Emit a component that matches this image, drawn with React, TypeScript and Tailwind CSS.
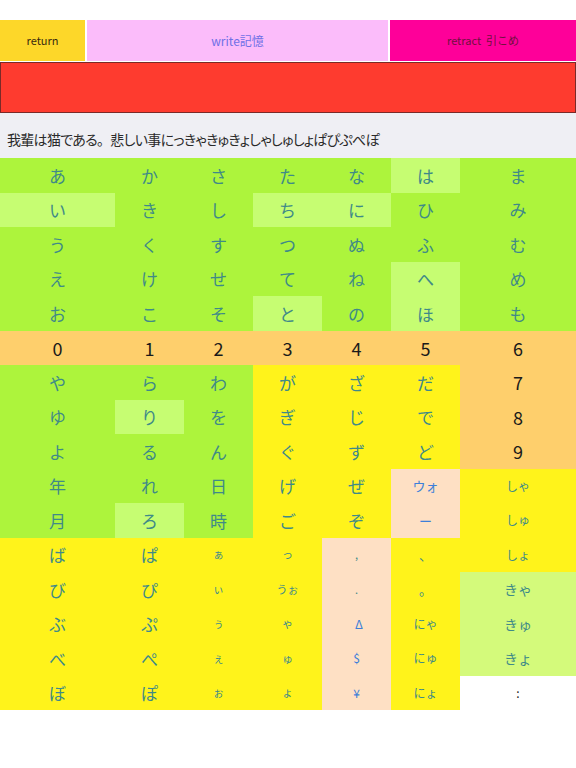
import React from "react";

type Cell = { t: string; bg: string; size?: string; color?: string };

const G = "bg-[#adf43c]";
const LG = "bg-[#c6fd72]";
const O = "bg-[#fecf6c]";
const Y = "bg-[#fff31b]";
const P = "bg-[#fee0c4]";
const LY = "bg-[#d4fa7b]";
const W = "bg-white";

const kana = "text-[#3f8a88]";
const blue = "text-[#3d7fd9]";
const dark = "text-[#1a1a1a]";

const k = (t: string, bg: string, size = "text-[17px]", color = kana): Cell => ({ t, bg, size, color });
const d = (t: string, bg = O): Cell => ({ t, bg, size: "text-[18px]", color: dark });
const s = (t: string, bg: string) => k(t, bg, "text-[11px]");
const c = (t: string, bg: string) => k(t, bg, "text-[12px]");

const rows: Cell[][] = [
    [k("あ", G), k("か", G), k("さ", G), k("た", G), k("な", G), k("は", LG), k("ま", G)],
    [k("い", LG), k("き", G), k("し", G), k("ち", LG), k("に", LG), k("ひ", G), k("み", G)],
    [k("う", G), k("く", G), k("す", G), k("つ", G), k("ぬ", G), k("ふ", G), k("む", G)],
    [k("え", G), k("け", G), k("せ", G), k("て", G), k("ね", G), k("へ", LG), k("め", G)],
    [k("お", G), k("こ", G), k("そ", G), k("と", LG), k("の", G), k("ほ", LG), k("も", G)],
    [d("0"), d("1"), d("2"), d("3"), d("4"), d("5"), d("6")],
    [k("や", G), k("ら", G), k("わ", G), k("が", Y), k("ざ", Y), k("だ", Y), d("7")],
    [k("ゆ", G), k("り", LG), k("を", G), k("ぎ", Y), k("じ", Y), k("で", Y), d("8")],
    [k("よ", G), k("る", G), k("ん", G), k("ぐ", Y), k("ず", Y), k("ど", Y), d("9")],
    [k("年", G), k("れ", G), k("日", G), k("げ", Y), k("ぜ", Y), k("ウォ", P, "text-[13px]", blue), c("しゃ", Y)],
    [k("月", G), k("ろ", LG), k("時", G), k("ご", Y), k("ぞ", Y), k("ー", P, "text-[13px]", blue), c("しゅ", Y)],
    [k("ば", Y), k("ぱ", Y), s("ぁ", Y), s("っ", Y), s(",", P), k("、", Y, "text-[13px]"), c("しょ", Y)],
    [k("び", Y), k("ぴ", Y), s("ぃ", Y), s("うぉ", Y), s(".", P), k("。", Y, "text-[13px]"), k("きゃ", LY, "text-[14px]")],
    [k("ぶ", Y), k("ぷ", Y), s("ぅ", Y), s("ゃ", Y), k("Δ", P, "text-[12px] pl-[5px]", blue), c("にゃ", Y), k("きゅ", LY, "text-[14px]")],
    [k("べ", Y), k("ぺ", Y), s("ぇ", Y), s("ゅ", Y), k("$", P, "text-[12px]", blue), c("にゅ", Y), k("きょ", LY, "text-[14px]")],
    [k("ぼ", Y), k("ぽ", Y), s("ぉ", Y), s("ょ", Y), k("¥", P, "text-[12px]", blue), c("にょ", Y), k(":", W, "text-[12px]", dark)],
];

export default function App() {
    return (
        <div className="w-[576px] h-[768px] bg-white font-['Noto_Sans_CJK_JP','Noto_Sans',sans-serif]">
            <div className="h-[20px]" />
            <div className="flex h-[41px] gap-[2px]">
                <div className="w-[85px] bg-[#fdd729] flex items-center justify-center text-[11px] text-[#3a2a10]">return</div>
                <div className="w-[301px] bg-[#fbbcfa] flex items-center justify-center text-[12px] text-[#6f70e6]">write記憶</div>
                <div className="flex-1 bg-[#fe0099] flex items-center justify-center text-[11px] text-[#70103f]">retract&nbsp;&nbsp;引こめ</div>
            </div>
            <div className="mt-[1px] h-[51px] bg-[#fe3b2f] border border-[#7a2a28]" />
            <div className="h-[45px] bg-[#efeff4] flex items-center pl-[7px] pt-[8px] text-[14px] tracking-[-0.7px] text-[#2a2a2a]">
                <span className="[font-feature-settings:'palt']">我輩は猫である</span>
                <span>。</span>
                <span className="[font-feature-settings:'palt']">悲しい事にっきゃきゅきょしゃしゅしょぱぴぷぺぽ</span>
            </div>
            <div className="grid grid-cols-[115px_69px_69px_69px_69px_69px_116px] auto-rows-[34.5px]">
                {rows.map((row, ri) =>
                    row.map((cell, ci) => (
                        <div
                            key={`${ri}-${ci}`}
                            className={`flex items-center justify-center leading-none ${cell.bg} ${cell.size} ${cell.color}`}
                        >
                            {cell.t}
                        </div>
                    ))
                )}
            </div>
        </div>
    );
}
